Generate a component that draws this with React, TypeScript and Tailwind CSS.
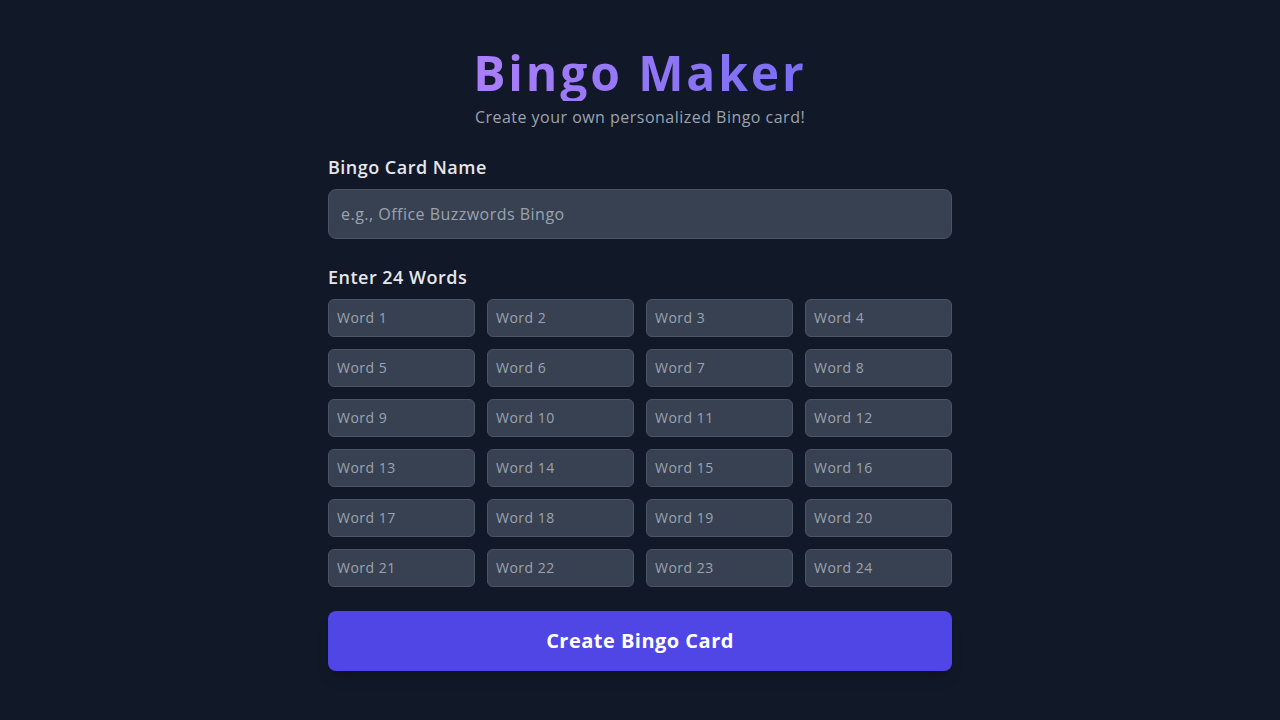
import React, { useState } from "react";

const App: React.FC = () => {
  const [cardName, setCardName] = useState("");
  const [words, setWords] = useState<string[]>(Array(24).fill(""));

  const updateWord = (index: number, value: string) => {
    const next = [...words];
    next[index] = value;
    setWords(next);
  };

  return (
    <div
      className="min-h-screen bg-[#111827] text-gray-100 tracking-[0.03em]"
      style={{ fontFamily: '"Open Sans", "Noto Sans", sans-serif' }}
    >
      <div className="max-w-2xl mx-auto px-6 pt-[45px] pb-12">
        {/* Header */}
        <div className="text-center mb-6">
          <h1 className="text-5xl leading-[56px] font-bold tracking-[0.06em] bg-gradient-to-r from-[#c084fc] to-[#6366f1] bg-clip-text text-transparent">
            Bingo Maker
          </h1>
          <p className="mt-1 text-base text-[#9ca3af]">Create your own personalized Bingo card!</p>
        </div>

        {/* Card name */}
        <div className="mb-6">
          <label htmlFor="cardName" className="block mb-2 text-lg font-semibold text-[#e5e7eb]">
            Bingo Card Name
          </label>
          <input
            id="cardName"
            type="text"
            value={cardName}
            onChange={(e) => setCardName(e.target.value)}
            placeholder="e.g., Office Buzzwords Bingo"
            className="w-full px-3 py-3 text-base leading-6 bg-[#374151] border border-[#4b5563] rounded-lg text-white placeholder-[#9ca3af] outline-none"
          />
        </div>

        {/* Words */}
        <div className="mb-6">
          <label className="block mb-2 text-lg font-semibold text-[#e5e7eb]">Enter 24 Words</label>
          <div className="grid grid-cols-4 gap-3">
            {words.map((word, i) => (
              <input
                key={i}
                type="text"
                value={word}
                onChange={(e) => updateWord(i, e.target.value)}
                placeholder={`Word ${i + 1}`}
                className="w-full px-2 py-2 text-sm leading-5 bg-[#374151] border border-[#4b5563] rounded-md text-white placeholder-[#9ca3af] outline-none"
              />
            ))}
          </div>
        </div>

        <button className="w-full py-4 text-xl leading-7 font-bold text-white bg-[#4f46e5] rounded-lg shadow-lg">
          Create Bingo Card
        </button>
      </div>
    </div>
  );
};

export default App;
